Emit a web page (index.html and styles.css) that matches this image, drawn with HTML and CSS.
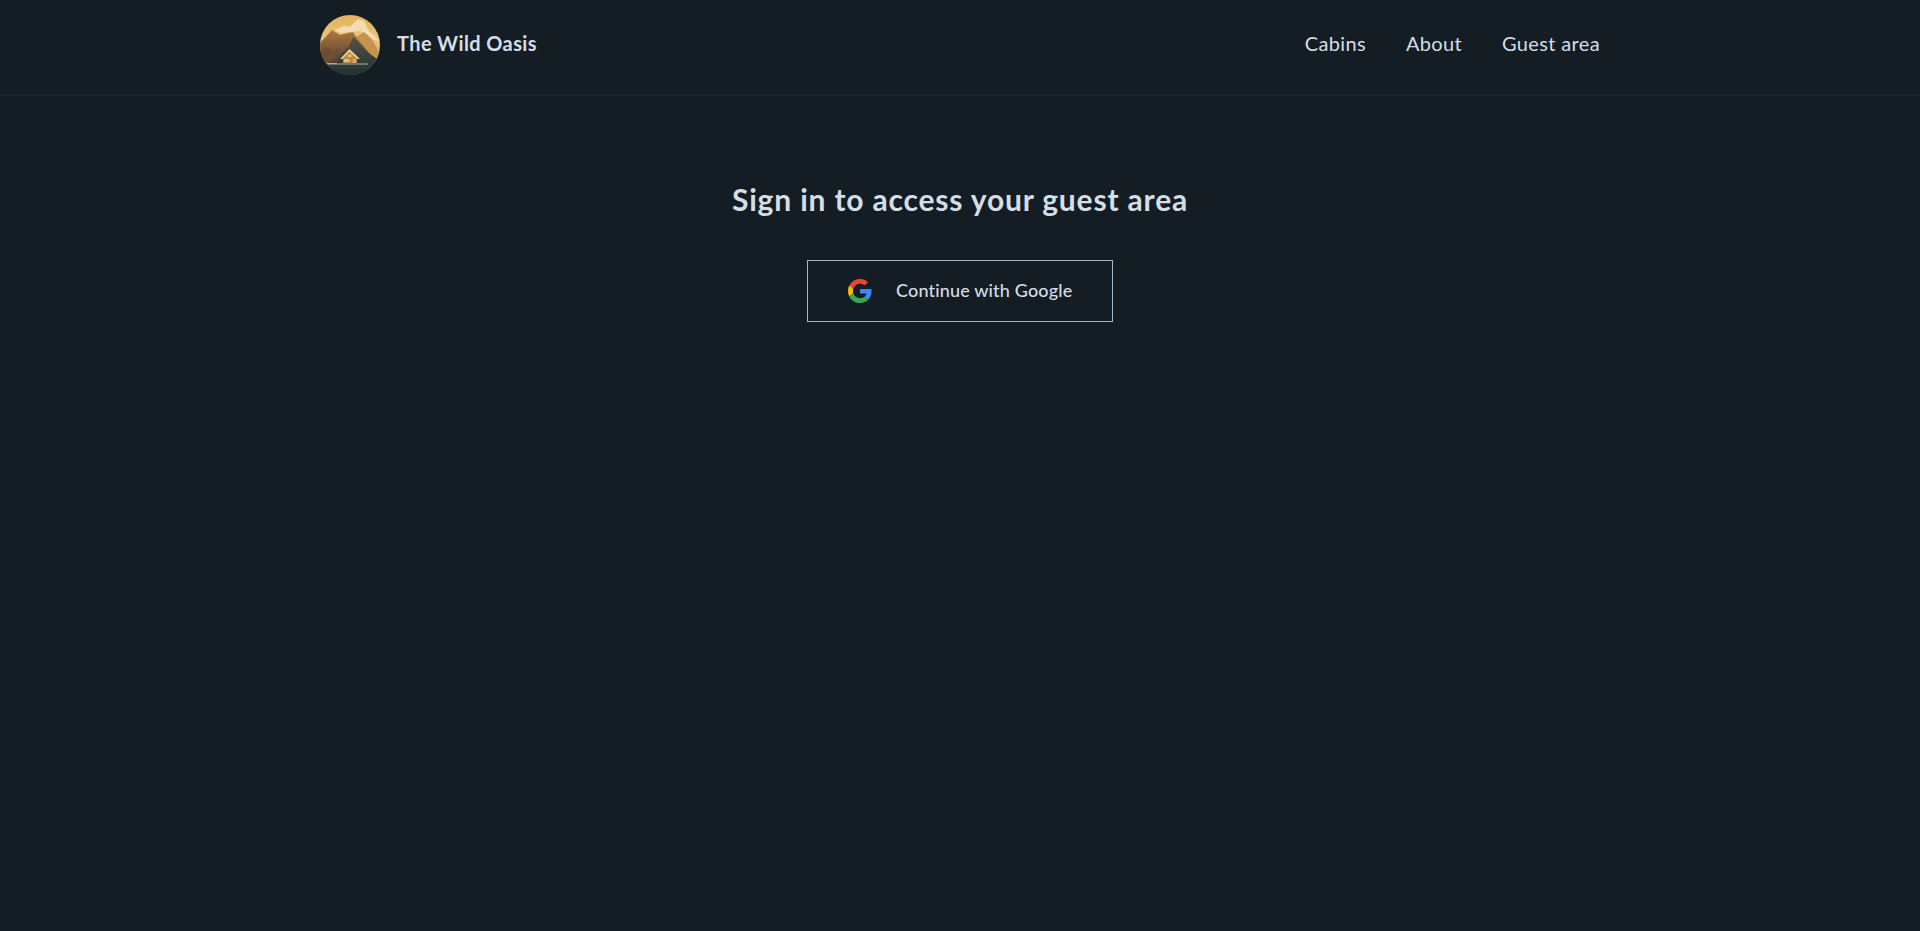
FILE: index.html
```html
<!DOCTYPE html>
<html lang="en">
<head>
<meta charset="utf-8">
<title>The Wild Oasis</title>
<link rel="stylesheet" href="styles.css">
</head>
<body>
<header class="site-header">
  <div class="header-inner">
    <a class="brand" href="#">
      <svg class="brand-logo" viewBox="0 0 60 60" aria-hidden="true">
        <defs>
          <clipPath id="disc"><circle cx="30" cy="30" r="30"/></clipPath>
          <linearGradient id="sky" x1="0" y1="0" x2="0" y2="1">
            <stop offset="0" stop-color="#e3b25c"/>
            <stop offset="0.4" stop-color="#e9c47e"/>
            <stop offset="1" stop-color="#c08f4c"/>
          </linearGradient>
          <linearGradient id="ridge" x1="0" y1="0" x2="0" y2="1">
            <stop offset="0" stop-color="#b07a3c"/>
            <stop offset="1" stop-color="#4f3d30"/>
          </linearGradient>
          <linearGradient id="slate" x1="0" y1="0" x2="0" y2="1">
            <stop offset="0" stop-color="#5a5044"/>
            <stop offset="1" stop-color="#2c3a3c"/>
          </linearGradient>
        </defs>
        <g clip-path="url(#disc)">
          <rect width="60" height="60" fill="url(#sky)"/>
          <path d="M15 15 24 11 30 12 38 4 44 6 48 15 60 27 52 24 40 16 30 17 20 18Z" fill="#f3ddb0"/>
          <path d="M44 17 52 24 60 40 60 48 40 40 36 22Z" fill="#c4944e"/>
          <path d="M0 28 12 15 20 20 28 18 33 17 38 25 58 48 0 48Z" fill="url(#ridge)"/>
          <path d="M0 36 8 32 12 38 17 33 20 40 8 48 0 48Z" fill="#6d4e36"/>
          <path d="M33 22 38 26 47 37 60 46 60 50 16 50 22 38 27 34 30 30Z" fill="url(#slate)"/>
          <rect y="49" width="60" height="11" fill="#2d3a38"/>
          <rect y="54" width="60" height="6" fill="#223532"/>
          <rect x="7" y="48.500" width="41" height="1" fill="#b3b09a"/>
          <path d="M23 43 30 36 37 43V48H23Z" fill="#bd8744"/>
          <path d="M20 44 29.500 34 40 44 37.500 44 29.500 36.800 22.500 44Z" fill="#efcf98"/>
          <rect x="24" y="44" width="5.500" height="3" fill="#e7bf7c"/>
          <rect x="32.500" y="44" width="3.500" height="4" fill="#d3a468"/>
          <rect x="28" y="39.500" width="3.500" height="2.500" fill="#e7bf7c"/>
        </g>
      </svg>
      <span class="brand-name">The Wild Oasis</span>
    </a>
    <nav class="main-nav">
      <a href="#">Cabins</a>
      <a href="#">About</a>
      <a href="#">Guest area</a>
    </nav>
  </div>
</header>
<main class="signin">
  <h1 class="signin-title">Sign in to access your guest area</h1>
  <button class="google-btn" type="button">
    <svg class="google-icon" viewBox="0 0 48 48" aria-hidden="true">
      <path fill="#EA4335" d="M24 9.500c3.540 0 6.710 1.220 9.210 3.600l6.850-6.850C35.900 2.380 30.470 0 24 0 14.620 0 6.510 5.380 2.560 13.220l7.980 6.190C12.430 13.720 17.740 9.500 24 9.500z"/>
      <path fill="#4285F4" d="M46.980 24.550c0-1.570-.15-3.090-.38-4.550H24v9.020h12.940c-.58 2.960-2.260 5.480-4.780 7.180l7.730 6c4.510-4.180 7.090-10.360 7.090-16.650z"/>
      <path fill="#FBBC05" d="M10.530 28.590c-.5-1.450-.78-2.990-.78-4.590s.27-3.140.78-4.590l-7.980-6.190C.92 16.460 0 20.120 0 24c0 3.880.92 7.540 2.560 10.780l7.970-6.190z"/>
      <path fill="#34A853" d="M24 48c6.480 0 11.930-2.130 16.130-5.810l-7.730-6c-2.150 1.450-4.920 2.300-8.400 2.300-6.260 0-11.570-4.220-13.470-9.910l-7.980 6.190C6.510 42.620 14.620 48 24 48z"/>
    </svg>
    <span class="google-label">Continue with Google</span>
  </button>
</main>
</body>
</html>
```
FILE: styles.css
```css
* { box-sizing: border-box; }

html, body { height: 100%; }

body {
  margin: 0;
  background: #141c24;
  color: #d4dee7;
  font-family: "Lato", "Liberation Sans", sans-serif;
}

a { color: inherit; text-decoration: none; }

.site-header {
  height: 96px;
  padding-top: 15px;
  border-bottom: 1px solid #1b2631;
}

.header-inner {
  max-width: 1280px;
  height: 60px;
  margin: 0 auto;
  display: flex;
  align-items: center;
  justify-content: space-between;
}

.brand {
  display: flex;
  align-items: center;
  gap: 17px;
}

.brand-logo {
  width: 60px;
  height: 60px;
  display: block;
}

.brand-name {
  padding-bottom: 4px;
  font-size: 20px;
  font-weight: 700;
  letter-spacing: 0.4px;
}

.main-nav {
  display: flex;
  gap: 40px;
  padding-bottom: 4px;
  font-size: 20px;
  letter-spacing: 0.35px;
}

.signin {
  display: flex;
  flex-direction: column;
  align-items: center;
  gap: 43px;
  padding-top: 85px;
}

.signin-title {
  margin: 0;
  font-size: 30px;
  line-height: 36px;
  font-weight: 700;
  letter-spacing: 0.82px;
}

.google-btn {
  display: flex;
  align-items: center;
  gap: 24px;
  width: 306px;
  height: 62px;
  padding: 0 40px;
  background: none;
  border: 1px solid #a3b8cc;
  color: inherit;
  font: inherit;
  font-size: 18px;
  font-weight: 500;
}

.google-label {
  padding-bottom: 2px;
  white-space: nowrap;
  letter-spacing: 0.16px;
}

.google-icon {
  width: 24px;
  height: 24px;
  display: block;
  flex: none;
}
```
